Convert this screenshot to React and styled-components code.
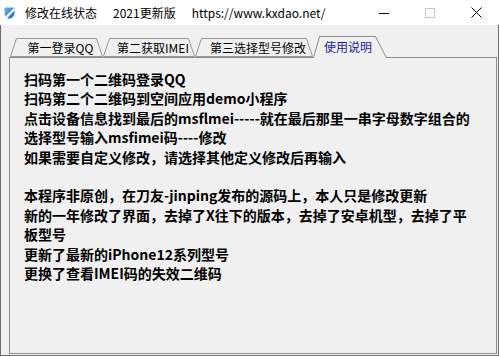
import styled, {createGlobalStyle} from 'styled-components';

const GlobalStyle = createGlobalStyle`
	html, body {
		margin:0;
		padding:0;
		width:499px;
		height:356px;
		overflow:hidden;
		background:#f0f0f0;
	}
	body {
		font-family:"Noto Sans CJK SC","Noto Sans",sans-serif;
	}
`

const Window = styled.div`
	width:499px;
	height:356px;
	display:flex;
	flex-direction:column;
	box-sizing:border-box;
`

const TitleBar = styled.div`
	height:25px;
	flex:none;
	background:#fff;
	display:flex;
	align-items:center;
`

const AppIcon = styled(({className})=>(
	<svg className={className} width="11" height="12" viewBox="0 0 11 12">
		<defs>
			<linearGradient id="shield" x1="0" y1="0" x2="1" y2="1">
				<stop offset="0" stopColor="#6fb6f2"/>
				<stop offset="1" stopColor="#1763c2"/>
			</linearGradient>
		</defs>
		<path d="M0.5 0.5 H10.5 V6 C10.5 9 8 11 5.5 11.8 C3 11 0.5 9 0.5 6 Z" fill="url(#shield)"/>
		<path d="M1.5 9.5 L9.5 1.5 L10.5 1.5 L10.5 3.5 L3.5 10.5 Z" fill="#fff"/>
		<path d="M8.5 0.5 H10.5 V2.5 Z" fill="#e8f2fc"/>
	</svg>
))`
	margin-left:4px;
	flex:none;
`

const Title = styled.div`
	margin-left:10px;
	font-size:12px;
	color:#000;
	display:flex;
	gap:16px;
	white-space:nowrap;
	flex:1;
`

const Captions = styled.div`
	display:flex;
	align-self:stretch;
`

const CaptionButton = styled.div`
	width:46px;
	display:flex;
	align-items:center;
	justify-content:center;
	svg { display:block; }
`

const Body = styled.div`
	flex:1;
	display:flex;
	flex-direction:column;
	background:#f0f0f0;
	border:1px solid #6f6f6f;
	border-top:none;
	padding:11px 1px 1px 8px;
	min-height:0;
`

const TabRow = styled.div`
	height:21px;
	flex:none;
	display:flex;
	align-items:flex-end;
	padding-left:1px;
`

const TabShape = styled(({className,active,w,h})=>(
	<svg className={className} width={w} height={h} viewBox={`0 0 ${w} ${h}`}>
		{active ? (
			<polyline
				points={`0.5,${h} 6.5,0.5 ${w-11.5},0.5 ${w-0.5},${h}`}
				fill="#f0f0f0" stroke="#8c8c8c" strokeWidth="1"/>
		) : (
			<polygon
				points={`0.5,${h-0.5} 6.5,0.5 ${w-6.5},0.5 ${w-0.5},${h-0.5}`}
				fill="#f0f0f0" stroke="#9a9a9a" strokeWidth="1"/>
		)}
	</svg>
))`
	position:absolute;
	left:0;
	top:0;
	z-index:0;
`

const TabBox = styled.div`
	position:relative;
	z-index:${p=>p.$active?2:1};
	width:${p=>p.$w}px;
	height:${p=>p.$active?22:19}px;
	margin-bottom:${p=>p.$active?-1:0}px;
	display:flex;
	align-items:${p=>p.$active?'flex-start':'center'};
	justify-content:center;
	padding-left:${p=>p.$active?0:8}px;
	padding-right:${p=>p.$active?4:0}px;
	padding-top:${p=>p.$active?2:0}px;
	box-sizing:border-box;
	font-size:12px;
	line-height:17px;
	color:${p=>p.$active?'#1a1aa0':'#000'};
	white-space:nowrap;
	span {
		position:relative;
		z-index:1;
	}
`

const Tab = ({w,active,children})=>(
	<TabBox $w={w} $active={active}>
		<TabShape w={w} h={active?22:19} active={active}/>
		<span>{children}</span>
	</TabBox>
)

const Panel = styled.div`
	flex:1;
	border:1px solid #8c8c8c;
	background:#f0f0f0;
	padding:12px 14px;
	min-height:0;
`

const Line = styled.div`
	font-size:14px;
	font-weight:700;
	line-height:19.4px;
	height:19.4px;
	color:#000;
	white-space:nowrap;
`

const lines = [
	'扫码第一个二维码登录QQ',
	'扫码第二个二维码到空间应用demo小程序',
	'点击设备信息找到最后的msflmei-----就在最后那里一串字母数字组合的',
	'选择型号输入msfimei码----修改',
	'如果需要自定义修改，请选择其他定义修改后再输入',
	'',
	'本程序非原创，在刀友-jinping发布的源码上，本人只是修改更新',
	'新的一年修改了界面，去掉了X往下的版本，去掉了安卓机型，去掉了平',
	'板型号',
	'更新了最新的iPhone12系列型号',
	'更换了查看IMEI码的失效二维码',
];

const tabs = [
	{label:'第一登录QQ', w:93},
	{label:'第二获取IMEI', w:92},
	{label:'第三选择型号修改', w:118},
	{label:'使用说明', w:74, active:true},
];

export default function App() {
	return (
		<Window>
			<GlobalStyle/>
			<TitleBar>
				<AppIcon/>
				<Title>
					<span>修改在线状态</span>
					<span>2021更新版</span>
					<span>https://www.kxdao.net/</span>
				</Title>
				<Captions>
					<CaptionButton>
						<svg width="10" height="10" viewBox="0 0 10 10">
							<line x1="0" y1="5.5" x2="10" y2="5.5" stroke="#000" strokeWidth="1"/>
						</svg>
					</CaptionButton>
					<CaptionButton>
						<svg width="10" height="10" viewBox="0 0 10 10">
							<rect x="0.5" y="0.5" width="9" height="9" fill="none" stroke="#c4c4c4" strokeWidth="1"/>
						</svg>
					</CaptionButton>
					<CaptionButton>
						<svg width="11" height="11" viewBox="0 0 11 11">
							<path d="M0.5 0.5 L10.5 10.5 M10.5 0.5 L0.5 10.5" stroke="#000" strokeWidth="1"/>
						</svg>
					</CaptionButton>
				</Captions>
			</TitleBar>
			<Body>
				<TabRow>
					{tabs.map((t,i)=>(
						<Tab key={i} w={t.w} active={t.active}>{t.label}</Tab>
					))}
				</TabRow>
				<Panel>
					{lines.map((l,i)=>(
						<Line key={i}>{l}</Line>
					))}
				</Panel>
			</Body>
		</Window>
	);
}
